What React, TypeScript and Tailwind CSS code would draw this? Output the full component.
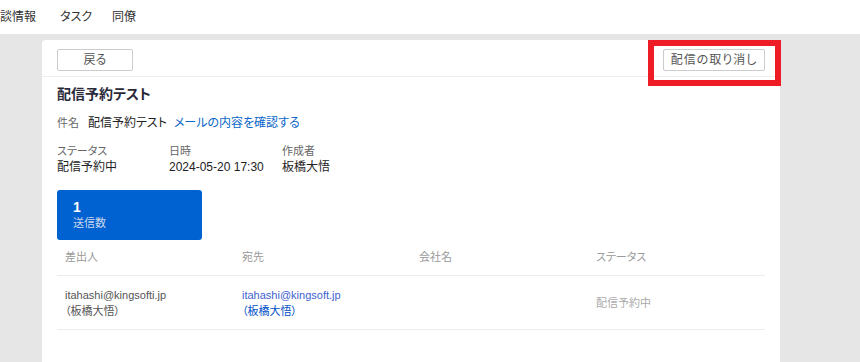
const font = { fontFamily: '"Liberation Sans", "Noto Sans CJK JP", sans-serif' };

type Row = {
  sender: string;
  senderName: string;
  to: string;
  toName: string;
  company: string;
  status: string;
};

const rows: Row[] = [
  {
    sender: 'itahashi@kingsofti.jp',
    senderName: '（板橋大悟）',
    to: 'itahashi@kingsoft.jp',
    toName: '（板橋大悟）',
    company: '',
    status: '配信予約中',
  },
];

function Meta({ label, value }: { label: string; value: string }) {
  return (
    <div className="flex flex-col">
      <span className="text-[11px] leading-[15px] text-[#666]">{label}</span>
      <span className="text-[12px] leading-[16px] text-[#222]">{value}</span>
    </div>
  );
}

export default function App() {
  return (
    <div
      className="relative flex min-h-[362px] flex-col bg-[#e6e6e6] text-[#333] [font-feature-settings:'palt']"
      style={font}
    >
      {/* top nav */}
      <div className="flex h-[34px] items-center bg-white text-[12px] text-[#333]">
        <span>談情報</span>
        <span className="ml-[24px]">タスク</span>
        <span className="ml-[20px]">同僚</span>
      </div>

      <div className="flex flex-1 pt-[6px] pl-[42px] pr-[80px]">
        <div className="flex flex-1 flex-col rounded-t-[4px] bg-white">
          {/* header */}
          <div className="flex items-center justify-between border-b border-[#eeeeee] px-[15px] pt-[9px] pb-[5px]">
            <button className="h-[22px] w-[76px] rounded-[2px] border border-[#cccccc] bg-white text-[12px] text-[#555]">
              戻る
            </button>
            <button className="h-[22px] w-[102px] rounded-[2px] border border-[#cccccc] bg-white text-[12px] tracking-[1px] text-[#555]">
              配信の取り消し
            </button>
          </div>

          <div className="flex flex-col px-[15px]">
            <h1 className="mt-[7px] text-[14px] font-bold leading-[20px] text-[#2a2a3a]">配信予約テスト</h1>

            <div className="mt-[10px] flex items-center leading-[18px]">
              <span className="text-[11px] text-[#666]">件名</span>
              <span className="ml-[9px] text-[12px] text-[#222]">配信予約テスト</span>
              <a className="ml-[7px] text-[12px] text-[#0a66c8]">メールの内容を確認する</a>
            </div>

            <div className="mt-[12px] flex">
              <div className="w-[112px]">
                <Meta label="ステータス" value="配信予約中" />
              </div>
              <div className="w-[113px]">
                <Meta label="日時" value="2024-05-20 17:30" />
              </div>
              <Meta label="作成者" value="板橋大悟" />
            </div>

            <div className="mt-[15px] flex h-[50px] w-[145px] flex-col rounded-[3px] bg-[#0062d0] pl-[16px] pt-[9px]">
              <span className="text-[14px] font-bold leading-[16px] text-white">1</span>
              <span className="text-[11px] leading-[16px] text-[#c9d6ee]">送信数</span>
            </div>

            {/* table */}
            <div className="grid h-[36px] grid-cols-4 items-center border-b border-[#ebebf2] text-[11px] text-[#999]">
              <span className="pl-[8px]">差出人</span>
              <span className="pl-[8px]">宛先</span>
              <span className="pl-[8px]">会社名</span>
              <span className="pl-[8px]">ステータス</span>
            </div>
            {rows.map((r) => (
              <div
                key={r.sender}
                className="grid h-[54px] grid-cols-4 items-center border-b border-[#ebebf2] text-[11px] leading-[16px]"
              >
                <div className="flex flex-col pl-[8px] text-[#555]">
                  <span>{r.sender}</span>
                  <span>{r.senderName}</span>
                </div>
                <div className="flex flex-col pl-[8px]">
                  <a className="text-[#3d62d0]">{r.to}</a>
                  <a className="text-[#0050c8]">{r.toName}</a>
                </div>
                <div className="pl-[8px] text-[#555]">{r.company}</div>
                <div className="pl-[8px] text-[#aaa]">{r.status}</div>
              </div>
            ))}
          </div>
        </div>
      </div>

      {/* highlight annotation */}
      <div className="pointer-events-none absolute left-[648px] top-[40px] h-[46px] w-[133px] border-[6px] border-[#ee1c25]" />
    </div>
  );
}
